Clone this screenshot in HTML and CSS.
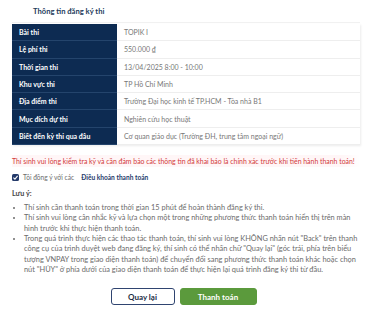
FILE: index.html
```html
<!DOCTYPE html>
<html lang="vi">
<head>
  <meta charset="UTF-8" />
  <meta name="viewport" content="width=device-width, initial-scale=1.0" />
  <title>Thông tin đăng ký thi</title>
  <link rel="stylesheet" href="styles.css">
</head>
<body>
  <div class="page">
    <div class="card-head">Thông tin đăng ký thi</div>

    <table class="info">
      <tr><th>Bài thi</th><td>TOPIK I</td></tr>
      <tr><th>Lệ phí thi</th><td>550.000 ₫</td></tr>
      <tr><th>Thời gian thi</th><td>13/04/2025 8:00 - 10:00</td></tr>
      <tr><th>Khu vực thi</th><td>TP Hồ Chí Minh</td></tr>
      <tr><th>Địa điểm thi</th><td>Trường Đại học kinh tế TP.HCM - Tòa nhà B1</td></tr>
      <tr><th>Mục đích dự thi</th><td>Nghiên cứu học thuật</td></tr>
      <tr><th>Biết đến kỳ thi qua đâu</th><td>Cơ quan giáo dục (Trường ĐH, trung tâm ngoại ngữ)</td></tr>
    </table>

    <div class="warn">Thí sinh vui lòng kiểm tra kỹ và cần đảm bảo các thông tin đã khai báo là chính xác trước khi tiến hành thanh toán!</div>

    <label class="agree">
      <span class="box">
        <svg viewBox="0 0 10 10" width="7" height="7"><path d="M2 5.2 L4.2 7.3 L8 2.8" fill="none" stroke="#fff" stroke-width="1.6"/></svg>
      </span>
      Tôi đồng ý với các <b>Điều khoản thanh toán</b>
    </label>

    <div class="note-title">Lưu ý:</div>
    <ul class="notes">
      <li>Thí sinh cần thanh toán trong thời gian 15 phút để hoàn thành đăng ký thi.</li>
      <li>Thí sinh vui lòng cân nhắc kỹ và lựa chọn một trong những phương thức thanh toán hiển thị trên màn hình trước khi thực hiện thanh toán.</li>
      <li>Trong quá trình thực hiện các thao tác thanh toán, thí sinh vui lòng KHÔNG nhấn nút "Back" trên thanh công cụ của trình duyệt web đang đăng ký, thí sinh có thể nhấn chữ "Quay lại" (góc trái, phía trên biểu tượng VNPAY trong giao diện thanh toán) để chuyển đổi sang phương thức thanh toán khác hoặc chọn nút "HỦY" ở phía dưới của giao diện thanh toán để thực hiện lại quá trình đăng ký thi từ đầu.</li>
    </ul>

    <div class="actions">
      <button class="btn back">Quay lại</button>
      <button class="btn pay">Thanh toán</button>
    </div>
  </div>
</body>
</html>
```

FILE: styles.css
```css
body {
  margin: 0;
  background: #fff;
  font-family: Lato, "Open Sans", sans-serif;
  color: #6b6b6b;
  font-size: 6.6px;
}
.page {
  width: 348px;
  padding: 0 0 0 12px;
}
.card-head {
  height: 22px;
  line-height: 22px;
  padding-left: 21px;
  font-size: 7.6px;
  font-weight: 700;
  color: #243c5c;
  border-bottom: 1px solid #f1f1f1;
  margin-bottom: 1px;
}
.info {
  width: 348px;
  border-collapse: collapse;
  box-shadow: 1px 1px 2px rgba(0, 0, 0, 0.08);
}
.info th,
.info td {
  height: 16.3px;
  padding: 0 7px;
  text-align: left;
  font-size: 7px;
  border-bottom: 1px solid #eeeeee;
}
.info th {
  width: 91px;
  background: #0d2b52;
  color: #fff;
  font-weight: 700;
  border-bottom-color: #24446c;
}
.info td {
  color: #777;
}
.warn {
  margin: 10px 0 0;
  padding: 2px 0;
  font-size: 6.9px;
  white-space: nowrap;
  color: #d23a3a;
  background: linear-gradient(to right, #fff6f7 95%, #fff);
}
.agree {
  display: flex;
  align-items: center;
  gap: 4px;
  margin-top: 5px;
  height: 10px;
}
.agree .box {
  width: 7px;
  height: 7px;
  background: #243a6a;
  border-radius: 1.5px;
  display: flex;
  align-items: center;
  justify-content: center;
}
.agree b {
  color: #243a6a;
  margin-left: 3px;
}
.note-title {
  margin-top: 7px;
  font-weight: 700;
  font-size: 7.2px;
  color: #444;
}
.notes {
  margin: 5px -4px 0 0;
  padding-left: 12px;
  font-size: 7.4px;
  line-height: 10.3px;
}
.actions {
  display: flex;
  justify-content: center;
  gap: 5px;
  margin: 13px 0 0;
  padding-right: 5px;
}
.btn {
  height: 17px;
  border-radius: 3px;
  font-family: Lato, "Open Sans", sans-serif;
  font-size: 8px;
  font-weight: 700;
  padding: 0;
}
.back {
  width: 64px;
  background: #fff;
  border: 1px solid #2f4470;
  color: #222c44;
}
.pay {
  width: 77px;
  background: #5b9a3c;
  border: 1px solid #5b9a3c;
  color: #fff;
}
```
